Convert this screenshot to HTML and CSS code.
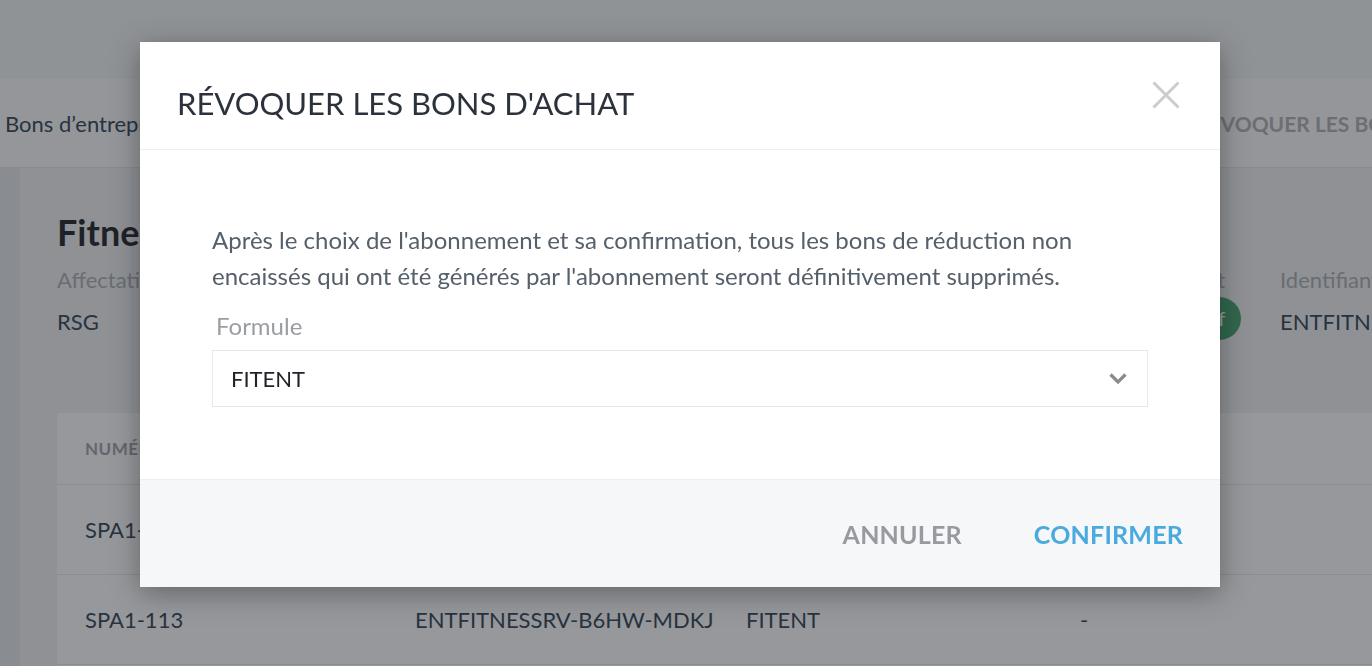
FILE: index.html
```html
<!DOCTYPE html>
<html lang="fr">
  <head>
    <meta charset="utf-8">
    <title>Révoquer les bons d'achat</title>
    <link rel="stylesheet" href="styles.css">
  </head>
  <body>
    <div class="page">
      <header class="topbar"></header>
      <nav class="tabs">
        <span class="tab">Bons d’entreprise</span>
        <span class="tab tab-action">RÉVOQUER LES BONS D'ACHAT</span>
      </nav>
      <div class="main">
        <aside class="sidebar"></aside>
        <section class="content">
          <h1 class="title">Fitness entreprise</h1>
          <div class="meta">
            <div class="meta-item">
              <span class="meta-label">Affectation</span>
              <span class="meta-value">RSG</span>
            </div>
            <div class="meta-item">
              <span class="meta-label">Statut</span>
              <span class="badge">Actif</span>
            </div>
            <div class="meta-item">
              <span class="meta-label">Identifiant</span>
              <span class="meta-value">ENTFITNESSRV</span>
            </div>
          </div>
          <div class="card">
            <div class="row row-head">
              <span>Numéro</span><span>Code</span><span>Formule</span><span>Encaissé le</span>
            </div>
            <div class="row">
              <span>SPA1-112</span><span>ENTFITNESSRV-A2KD-PLQR</span><span>FITENT</span><span>-</span>
            </div>
            <div class="row">
              <span>SPA1-113</span><span>ENTFITNESSRV-B6HW-MDKJ</span><span>FITENT</span><span>-</span>
            </div>
            <div class="row">
              <span>SPA1-114</span><span>ENTFITNESSRV-C9TX-QWNE</span><span>FITENT</span><span>-</span>
            </div>
          </div>
        </section>
      </div>
    </div>

    <div class="overlay">
      <div class="modal">
        <div class="modal-header">
          <h2 class="modal-title">RÉVOQUER LES BONS D'ACHAT</h2>
          <button class="close" aria-label="Fermer">
            <svg width="28" height="28" viewBox="0 0 28 28">
              <path d="M1.5 1.5 L26.5 26.5 M26.5 1.5 L1.5 26.5" stroke="#cccccc" stroke-width="3" fill="none"/>
            </svg>
          </button>
        </div>
        <div class="modal-body">
          <p class="notice">Après le choix de l'abonnement et sa confirmation, tous les bons de réduction non encaissés qui ont été générés par l'abonnement seront définitivement supprimés.</p>
          <label class="field-label">Formule</label>
          <div class="select">
            <span>FITENT</span>
            <svg width="18" height="11" viewBox="0 0 18 11">
              <path d="M1.5 1.5 L9 9 L16.5 1.5" stroke="#8a8b8e" stroke-width="3.2" fill="none"/>
            </svg>
          </div>
        </div>
        <div class="modal-footer">
          <button class="btn btn-cancel">ANNULER</button>
          <button class="btn btn-confirm">CONFIRMER</button>
        </div>
      </div>
    </div>
  </body>
</html>
```

FILE: styles.css
```css
html, body {
  margin: 0;
  height: 100%;
  overflow: hidden;
}

body {
  font-family: Lato, "Open Sans", sans-serif;
  color: #2c3540;
  background: #f1f2f4;
}

/* page behind the dialog */

.topbar {
  height: 79px;
  background: #f4f5f6;
}

.tabs {
  display: grid;
  grid-template-columns: 1190px auto;
  align-items: center;
  height: 88px;
  background: #fbfbfc;
  border-bottom: 1px solid #e3e5e8;
  white-space: nowrap;
  overflow: hidden;
}

.tab {
  padding-left: 5px;
  font-size: 22px;
  color: #2c3e50;
}

.tab-action {
  font-size: 21px;
  font-weight: 700;
  color: #adb0b5;
}

.main {
  display: flex;
  height: 520px;
}

.sidebar {
  width: 20px;
  background: #e6e8eb;
}

.content {
  flex: 1;
  padding: 44px 0 0 37px;
  white-space: nowrap;
  overflow: hidden;
}

.title {
  margin: 0;
  font-size: 36px;
  font-weight: 700;
  color: #1a1e24;
  line-height: 40px;
}

.meta {
  display: grid;
  grid-template-columns: 1074px 77px auto;
  column-gap: 36px;
  margin-top: 12px;
}

.meta-item {
  display: flex;
  flex-direction: column;
  align-items: flex-start;
  gap: 10px;
  font-size: 22px;
}

.meta-label {
  color: #a9adb3;
  line-height: 32px;
}

.meta-value {
  color: #2c3e50;
  line-height: 32px;
}

.badge {
  height: 43px;
  line-height: 43px;
  padding: 0 16px;
  margin-top: -9px;
  border-radius: 22px;
  background: #3fa36b;
  color: #fff;
  font-size: 20px;
}

.card {
  margin-top: 73px;
  background: #fff;
}

.row {
  display: grid;
  grid-template-columns: 330px 331px 334px auto;
  align-items: center;
  height: 89px;
  padding-left: 28px;
  border-top: 1px solid #e6e8eb;
  font-size: 22px;
  color: #2c3e50;
}

.row-head {
  height: 71px;
  border-top: none;
  font-size: 17px;
  font-weight: 700;
  letter-spacing: 0.5px;
  text-transform: uppercase;
  color: #9ca1a8;
}

/* dialog */

.overlay {
  position: fixed;
  inset: 0;
  display: flex;
  justify-content: center;
  align-items: flex-start;
  padding: 42px 12px 0 0;
  background: rgba(35, 39, 47, 0.48);
}

.modal {
  width: 1080px;
  background: #fff;
  box-shadow: 0 6px 28px rgba(0, 0, 0, 0.35);
}

.modal-header {
  display: flex;
  justify-content: space-between;
  align-items: center;
  height: 93px;
  padding: 14px 40px 0 37px;
  border-bottom: 1px solid #eeeff1;
}

.modal-title {
  margin: 0;
  font-size: 31px;
  font-weight: 400;
  color: #2b323b;
}

.close {
  display: flex;
  padding: 0;
  margin-top: -16px;
  border: none;
  background: none;
}

.modal-body {
  padding: 72px;
}

.notice {
  margin: 0 0 14px;
  font-size: 24px;
  line-height: 36px;
  color: #56606a;
}

.field-label {
  display: block;
  padding-left: 4px;
  font-size: 24px;
  line-height: 36px;
  color: #9a9ea3;
}

.select {
  display: flex;
  justify-content: space-between;
  align-items: center;
  height: 55px;
  margin-top: 6px;
  padding: 0 20px 0 18px;
  border: 1px solid #e6e7e9;
  font-size: 22px;
  color: #1f2226;
}

.modal-footer {
  display: flex;
  justify-content: flex-end;
  align-items: center;
  gap: 72px;
  height: 107px;
  padding-right: 37px;
  background: #f6f7f9;
  border-top: 1px solid #eeeff1;
}

.btn {
  padding: 0;
  border: none;
  background: none;
  font-family: inherit;
  font-size: 25px;
  font-weight: 700;
  letter-spacing: 0.2px;
}

.btn-cancel {
  color: #999aa0;
}

.btn-confirm {
  color: #4aa9de;
}
```
